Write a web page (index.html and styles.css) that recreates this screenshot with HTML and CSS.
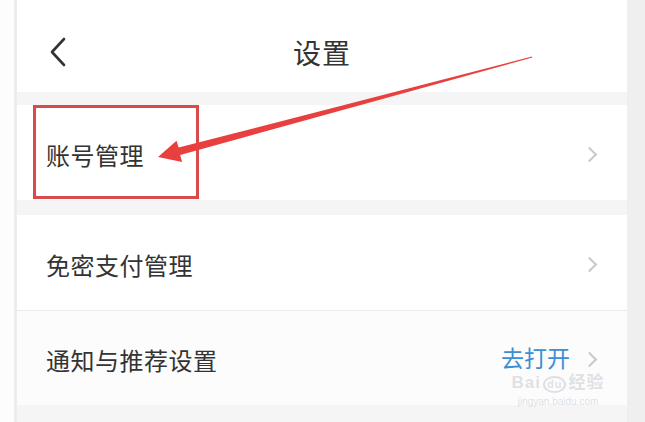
FILE: index.html
```html
<!DOCTYPE html>
<html lang="zh-CN">
<head>
  <meta charset="UTF-8" />
  <meta name="viewport" content="width=device-width, initial-scale=1.0"/>
  <title>设置</title>
  <link rel="stylesheet" href="styles.css">
</head>
<body>
  <div class="frame">
    <div class="gutter"></div>

    <main class="screen">
      <header class="topbar">
        <svg class="back" width="20" height="30" viewBox="0 0 20 30">
          <polyline points="16,2 4,15 16,28" fill="none" stroke="#333" stroke-width="2.6" stroke-linecap="round" stroke-linejoin="round"/>
        </svg>
        <h1>设置</h1>
      </header>

      <div class="gap"></div>

      <section class="group">
        <div class="row">
          <span class="label">账号管理</span>
          <span class="chev"></span>
        </div>
      </section>

      <div class="gap gap-lg"></div>

      <section class="group">
        <div class="row">
          <span class="label">免密支付管理</span>
          <span class="chev"></span>
        </div>
        <div class="row row-soft">
          <span class="label">通知与推荐设置</span>
          <span class="action">去打开</span>
          <span class="chev"></span>
        </div>
      </section>

      <div class="gap gap-end"></div>

      <!-- annotation layer -->
      <div class="mark-box"></div>
      <svg class="arrow" width="610" height="422" viewBox="17 0 610 422">
        <polygon points="158,157 176.5,140.7 178.6,147.6 532,56.6 532.3,57.6 180.2,155.0 182.1,161.9" fill="#e8403e"/>
      </svg>
      <div class="watermark">
        <span class="wm-logo">Bai<b>du</b>经验</span>
        <span class="wm-url">jingyan.baidu.com</span>
      </div>
    </main>

    <div class="edge"></div>
  </div>
</body>
</html>
```

FILE: styles.css
```css
body {
  margin: 0;
  padding: 0;
  background: #fff;
  font-family: "Noto Sans CJK SC", "Noto Sans", sans-serif;
  color: #333;
  overflow: hidden;
}

.frame {
  display: flex;
  width: 645px;
  height: 422px;
}

.gutter {
  width: 14px;
  background: #fdfdfd;
  border-right: 3px solid #ededed;
}

.edge {
  width: 18px;
  background: #efefef;
}

.screen {
  position: relative;
  width: 610px;
  display: flex;
  flex-direction: column;
  background: #f5f5f5;
}

.topbar {
  height: 92px;
  background: #fff;
  display: flex;
  align-items: center;
  justify-content: center;
  position: relative;
}

.back {
  position: absolute;
  left: 31px;
  top: 37px;
}

.topbar h1 {
  margin: 0;
  font-size: 28px;
  font-weight: 400;
  color: #333;
  letter-spacing: 1px;
  margin-top: 12px;
}

.gap {
  height: 13px;
  background: #f5f5f5;
}

.gap-lg {
  height: 15px;
}

.gap-end {
  flex: 1;
}

.group {
  background: #fff;
}

.row {
  height: 95px;
  display: flex;
  align-items: center;
  padding: 3px 29px 0 29px;
  box-sizing: border-box;
}

.row + .row {
  border-top: 1px solid #ececec;
  height: 95px;
}

.row-soft {
  background: #fcfcfc;
}

.label {
  flex: 1;
  font-size: 24px;
  letter-spacing: 0.5px;
  color: #333;
}

.action {
  font-size: 23px;
  line-height: 1;
  color: #3d8fd1;
  margin-right: 14px;
  margin-top: -4px;
}

.chev {
  width: 9px;
  height: 9px;
  border-top: 2px solid #c9c9c9;
  border-right: 2px solid #c9c9c9;
  transform: rotate(45deg);
  margin-right: 3px;
}

.mark-box {
  position: absolute;
  left: 16px;
  top: 105px;
  width: 160px;
  height: 88px;
  border: 3px solid #d94a4a;
}

.arrow {
  position: absolute;
  left: 0;
  top: 0;
}

.watermark {
  position: absolute;
  left: 482px;
  top: 374px;
  width: 118px;
  display: flex;
  flex-direction: column;
  align-items: center;
  color: rgba(175, 180, 190, 0.4);
  line-height: 1;
}

.wm-logo {
  font-family: "Liberation Sans", "Noto Sans CJK SC", sans-serif;
  font-size: 17px;
  font-weight: 700;
  letter-spacing: 1px;
}

.wm-logo b {
  display: inline-block;
  font-size: 11px;
  border: 2px solid rgba(175, 180, 190, 0.4);
  border-radius: 50%;
  padding: 1px 2px;
  margin: 0 2px;
}

.wm-url {
  font-family: "Liberation Sans", sans-serif;
  font-size: 10px;
  margin-top: 4px;
}
```
